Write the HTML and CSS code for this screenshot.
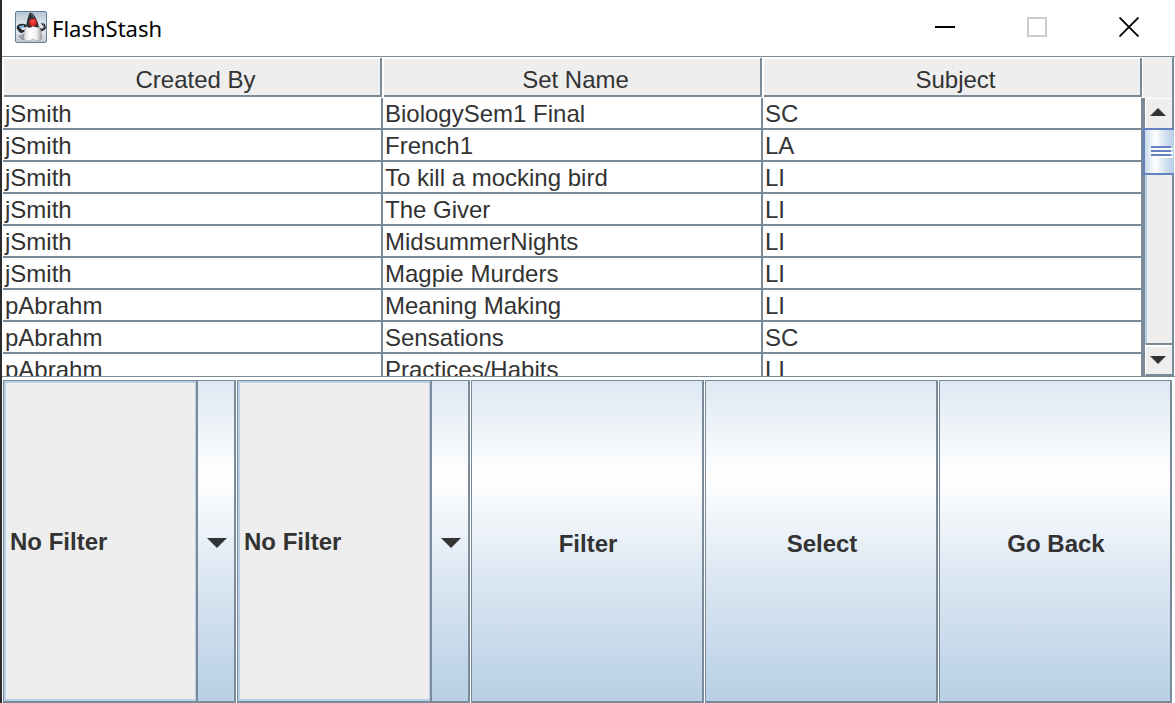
FILE: index.html
```html
<!DOCTYPE html>
<html lang="en">
<head>
<meta charset="utf-8">
<title>FlashStash</title>
<link rel="stylesheet" href="styles.css">
</head>
<body>
<div class="window">
  <header class="titlebar">
    <svg class="logo" viewBox="0 0 32 32" aria-hidden="true">
      <defs>
        <linearGradient id="tile" x1="0" y1="0" x2="0" y2="1"><stop offset="0" stop-color="#b3c5d4"/><stop offset=".55" stop-color="#edf1f4"/><stop offset="1" stop-color="#c3c5d0"/></linearGradient>
        <linearGradient id="belly" x1="0" y1="0" x2="1" y2="0"><stop offset="0" stop-color="#d8d8d8"/><stop offset=".35" stop-color="#fff"/><stop offset=".7" stop-color="#eee"/><stop offset="1" stop-color="#999"/></linearGradient>
        <radialGradient id="nose" cx=".45" cy=".35" r=".7"><stop offset="0" stop-color="#ff4a40"/><stop offset="1" stop-color="#c01418"/></radialGradient>
      </defs>
      <rect x=".5" y=".5" width="31" height="31" rx="1.5" fill="url(#tile)" stroke="#5d7f9b"/>
      <path d="M3 25 10 22 11 29 7 29Z" fill="#77778c" opacity=".6"/>
      <path d="M12 14Q5 11 2 15Q1 18 3 19Q4 22 7 22L12 19Z" fill="#28292b"/>
      <path d="M4 15 9 14 9 17 5 18Z" fill="#79aed4"/>
      <path d="M6 17 11 16 10 19 7 19Z" fill="#e6edf2"/>
      <path d="M24 16 27 18 29 15.500 28 12 30 13 31 17Q29 21 26 20Z" fill="#303234"/>
      <path d="M26.500 12 28.500 15" stroke="#303234" stroke-width="1.200"/>
      <path d="M11.500 14Q17 12 23.500 14Q26 19 27 26Q27 29 24 29.500Q20 30 18 28Q15 30 11 30Q8 29 9 25Q9 19 11.500 14Z" fill="url(#belly)" stroke="#888" stroke-width=".4"/>
      <path d="M14.500 2Q16 1 18 3Q22 7 24 16Q21 17 18 15Q15 18 11 15.500Q12 8 14.500 2Z" fill="#303032"/>
      <path d="M16 3Q18 5 19 7" stroke="#777" fill="none"/>
      <circle cx="18" cy="11.500" r="3.800" fill="url(#nose)"/>
    </svg>
    <h1 class="title">FlashStash</h1>
    <div class="controls">
      <button class="control" aria-label="Minimize"><svg viewBox="0 0 20 20"><path d="M0 10H20" stroke="#000" stroke-width="2"/></svg></button>
      <button class="control" aria-label="Maximize" disabled><svg viewBox="0 0 20 20"><rect x="1" y="1" width="18" height="18" fill="none" stroke="#ccc" stroke-width="2"/></svg></button>
      <button class="control" aria-label="Close"><svg viewBox="0 0 20 20"><path d="M.5 .5 19.500 19.500M19.500 .5 .5 19.500" stroke="#000" stroke-width="1.800"/></svg></button>
    </div>
  </header>
  <main class="content">
    <section class="scrollpane">
      <div class="viewport">
        <table class="sets">
          <thead><tr><th scope="col"><div class="head">Created By</div></th><th scope="col"><div class="head">Set Name</div></th><th scope="col"><div class="head">Subject</div></th></tr></thead>
          <tbody>
            <tr><td>jSmith</td><td>BiologySem1 Final</td><td>SC</td></tr>
            <tr><td>jSmith</td><td>French1</td><td>LA</td></tr>
            <tr><td>jSmith</td><td>To kill a mocking bird</td><td>LI</td></tr>
            <tr><td>jSmith</td><td>The Giver</td><td>LI</td></tr>
            <tr><td>jSmith</td><td>MidsummerNights</td><td>LI</td></tr>
            <tr><td>jSmith</td><td>Magpie Murders</td><td>LI</td></tr>
            <tr><td>pAbrahm</td><td>Meaning Making</td><td>LI</td></tr>
            <tr><td>pAbrahm</td><td>Sensations</td><td>SC</td></tr>
            <tr><td>pAbrahm</td><td>Practices/Habits</td><td>LI</td></tr>
          </tbody>
        </table>
      </div>
      <div class="side">
        <div class="corner"></div>
        <div class="scrollbar">
          <button class="step step-up" aria-label="Scroll up"><svg viewBox="0 0 16 8"><path d="M0 8 8 0 16 8Z"/></svg></button>
          <div class="track"><div class="thumb"><span class="grip"></span><span class="grip"></span><span class="grip"></span></div></div>
          <button class="step step-down" aria-label="Scroll down"><svg viewBox="0 0 16 8"><path d="M0 0H16L8 8Z"/></svg></button>
        </div>
      </div>
    </section>
    <section class="actions">
      <div class="combo">
        <select class="combo-select" aria-label="Creator filter"><option>No Filter</option></select>
        <div class="combo-arrow"><svg viewBox="0 0 20 10"><path d="M0 0H20L10 10Z"/></svg></div>
      </div>
      <div class="combo">
        <select class="combo-select" aria-label="Subject filter"><option>No Filter</option></select>
        <div class="combo-arrow"><svg viewBox="0 0 20 10"><path d="M0 0H20L10 10Z"/></svg></div>
      </div>
      <button class="action">Filter</button>
      <button class="action">Select</button>
      <button class="action">Go Back</button>
    </section>
  </main>
</div>
</body>
</html>
```
FILE: styles.css
```css
:root {
  --line: #7a8a99;
  --face: #eeeeee;
  --pale: #b8cfe5;
  --ink: #333333;
  --metal: linear-gradient(#dde8f3, #ffffff 30%, #dde8f3 60%, #b8cfe5);
}
* { box-sizing: border-box; }
body {
  margin: 0;
  background: #fff;
  color: var(--ink);
  font-family: "Liberation Sans", Arial, sans-serif;
  font-size: 24px;
}
button, select { margin: 0; padding: 0; border: 0; border-radius: 0; color: inherit; font: inherit; }
svg { display: block; }
.window {
  display: flex;
  flex-direction: column;
  height: 100vh;
  border-left: 2px solid #2b2b2b;
}
.titlebar {
  display: flex;
  align-items: center;
  flex: none;
  height: 57px;
  padding: 0 0 2px 13px;
  border-bottom: 1px solid var(--line);
}
.logo { width: 32px; height: 32px; }
.title {
  margin: 2px 0 0 5px;
  color: #000;
  font: 400 22px/32px "Noto Sans", "Open Sans", sans-serif;
}
.controls { display: flex; align-items: center; margin-left: auto; }
.control { display: grid; place-items: center; width: 92px; height: 54px; background: none; }
.control svg { width: 20px; height: 20px; }
.content {
  display: grid;
  grid-template-rows: minmax(0, 1fr) minmax(0, 1fr);
  flex: 1;
  min-height: 0;
}
.scrollpane {
  display: flex;
  min-height: 0;
  margin-bottom: 3px;
  padding-left: 1px;
  border-bottom: 1px solid var(--line);
}
.viewport { flex: 1; overflow: hidden; }
.sets { width: 100%; table-layout: fixed; border-collapse: separate; border-spacing: 0; }
.sets th { padding: 1px; font-weight: 400; }
.head {
  height: 39px;
  padding: 1px 0 0 7px;
  border: solid var(--line);
  border-width: 0 2px 2px 0;
  background: var(--face);
  box-shadow: inset 0 1px #fff;
  line-height: 41px;
}
.sets td {
  height: 32px;
  padding: 1px 2px 0;
  border: solid var(--line);
  border-width: 0 2px 2px 0;
  line-height: 29px;
  white-space: nowrap;
}
.side { display: flex; flex-direction: column; width: 32px; }
.corner { height: 41px; margin-right: 1px; border-right: 2px solid var(--line); background: var(--face); }
.scrollbar {
  display: flex;
  flex-direction: column;
  flex: 1;
  min-height: 0;
  margin-right: 1px;
  border: solid var(--line);
  border-width: 0 2px;
  background: var(--face);
}
.step {
  display: grid;
  place-items: center;
  flex: none;
  padding-right: 2px;
  border: solid #fff;
  border-width: 1px 0 0 1px;
  background: var(--face);
}
.step svg { width: 16px; height: 8px; fill: var(--ink); }
.step-up { height: 30px; padding-bottom: 3px; }
.step-down { height: 33px; border-top: 2px solid var(--line); border-bottom: 2px solid var(--line); box-shadow: inset 0 2px #fff; }
.track { flex: 1; box-shadow: inset 2px 0 var(--pale); }
.thumb {
  display: flex;
  flex-direction: column;
  gap: 2px;
  height: 47px;
  margin: 0 -2px;
  padding: 16px 3px 0 6px;
  border: solid #6382bf;
  border-width: 2px 0 2px 2px;
  background: linear-gradient(90deg, #c8daeb, #fff 35%, #d3e1f0 70%, #b8cfe5);
}
.grip { height: 2px; background: #6382bf; box-shadow: 2px 2px #fff; }
.actions {
  display: grid;
  grid-template-columns: repeat(5, minmax(0, 1fr));
  gap: 1px;
  padding: 0 3px 0 1px;
}
.action, .combo {
  border: solid var(--line);
  border-width: 1px 2px 2px 1px;
  font-weight: 700;
}
.action { padding: 6px 0 0 2px; background: var(--metal); }
.combo { display: grid; grid-template-columns: minmax(0, 1fr) 38px; }
.combo-select {
  appearance: none;
  width: 100%;
  height: 100%;
  padding-left: 4px;
  border: 2px solid var(--pale);
  border-right-width: 1px;
  background: var(--face);
}
.combo-arrow { display: grid; place-items: center; padding-left: 2px; border-left: 2px solid var(--line); background: var(--metal); pointer-events: none; }
.combo-arrow svg { width: 20px; height: 10px; margin-top: 4px; fill: var(--ink); }
```
